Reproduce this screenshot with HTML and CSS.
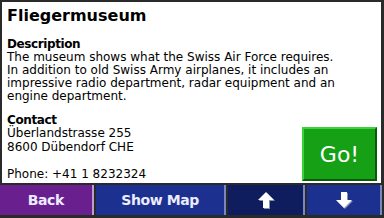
FILE: index.html
```html
<!DOCTYPE html>
<html>
<head>
<meta charset="utf-8">
<link rel="stylesheet" href="styles.css">
</head>
<body>
<div class="screen">
  <div class="content">
    <h1 class="title">Fliegermuseum</h1>
    <div class="section desc">
      <h2 class="head">Description</h2>
      <p class="text">The museum shows what the Swiss Air Force requires.<br>In addition to old Swiss Army airplanes, it includes an impressive radio department, radar equipment and an engine department.</p>
    </div>
    <div class="lower">
      <div class="section contact">
        <h2 class="head">Contact</h2>
        <p class="text">Überlandstrasse 255<br>8600 Dübendorf CHE<br><br>Phone: +41 1 8232324</p>
      </div>
      <button class="go">Go!</button>
    </div>
  </div>
  <div class="bar">
    <button class="btn back">Back</button>
    <button class="btn map">Show Map</button>
    <button class="btn up" aria-label="Up">
      <svg width="18" height="18" viewBox="0 0 18 18"><path d="M9 1 L17 9 L12 9 L12 17 L6 17 L6 9 L1 9 Z" fill="#8a8fa8" transform="translate(1,1)"/><path d="M9 1 L17 9 L12 9 L12 17 L6 17 L6 9 L1 9 Z" fill="#ffffff"/></svg>
    </button>
    <button class="btn down" aria-label="Down">
      <svg width="18" height="18" viewBox="0 0 18 18"><path d="M6 1 L12 1 L12 9 L17 9 L9 17 L1 9 L6 9 Z" fill="#8a8fa8" transform="translate(1,1)"/><path d="M6 1 L12 1 L12 9 L17 9 L9 17 L1 9 L6 9 Z" fill="#ffffff"/></svg>
    </button>
  </div>
</div>
</body>
</html>
```
FILE: styles.css
```css
html, body {
  margin: 0;
  padding: 0;
  background: #1a1a1a;
}
.screen {
  width: 384px;
  height: 218px;
  display: flex;
  flex-direction: column;
  background: #2a2a2a;
  font-family: "DejaVu Sans", sans-serif;
}
.content {
  margin: 2px 3px 0 2px;
  height: 181px;
  background: #ffffff;
  padding: 0 0 0 5px;
  box-sizing: border-box;
  color: #000;
  display: flex;
  flex-direction: column;
}
.title {
  margin: 0;
  padding-top: 4px;
  font-size: 16px;
  font-weight: bold;
  line-height: 20px;
}
.desc {
  margin-top: 11px;
}
.head {
  margin: 0;
  font-size: 12px;
  font-weight: bold;
  line-height: 14px;
  letter-spacing: -0.4px;
}
.text {
  margin: 0;
  font-size: 12px;
  line-height: 13px;
}
.desc .text {
  width: 340px;
}
.lower {
  flex: 1;
  display: flex;
  justify-content: space-between;
  align-items: flex-end;
  padding-bottom: 3px;
}
.contact {
  align-self: flex-start;
  margin-top: 10px;
}
.contact .text {
  line-height: 13.5px;
}
.go {
  width: 75px;
  height: 54px;
  margin-right: 4px;
  background: #16a016;
  border: 2px solid #3ad43a;
  border-right-color: #0a5a0a;
  border-bottom-color: #0a5a0a;
  color: #ffffff;
  font-family: "DejaVu Sans", sans-serif;
  font-size: 22px;
  padding: 0;
}
.bar {
  display: flex;
  gap: 2px;
  padding: 2px 2px 4px 0;
  flex: 1;
}
.btn {
  height: 30px;
  border: none;
  border-right: 2px solid #7a86c0;
  color: #ececff;
  font-family: "DejaVu Sans", sans-serif;
  font-weight: bold;
  font-size: 14px;
  letter-spacing: -0.4px;
  padding: 0;
  display: flex;
  align-items: center;
  justify-content: center;
}
.back {
  width: 94px;
  background: #6a1f8e;
  border-right-color: #b9a0cc;
}
.map {
  width: 131px;
  background: #1c3090;
}
.up {
  width: 77px;
  background: #0f1c5e;
}
.down {
  width: 75px;
  background: #1c3090;
}
```
